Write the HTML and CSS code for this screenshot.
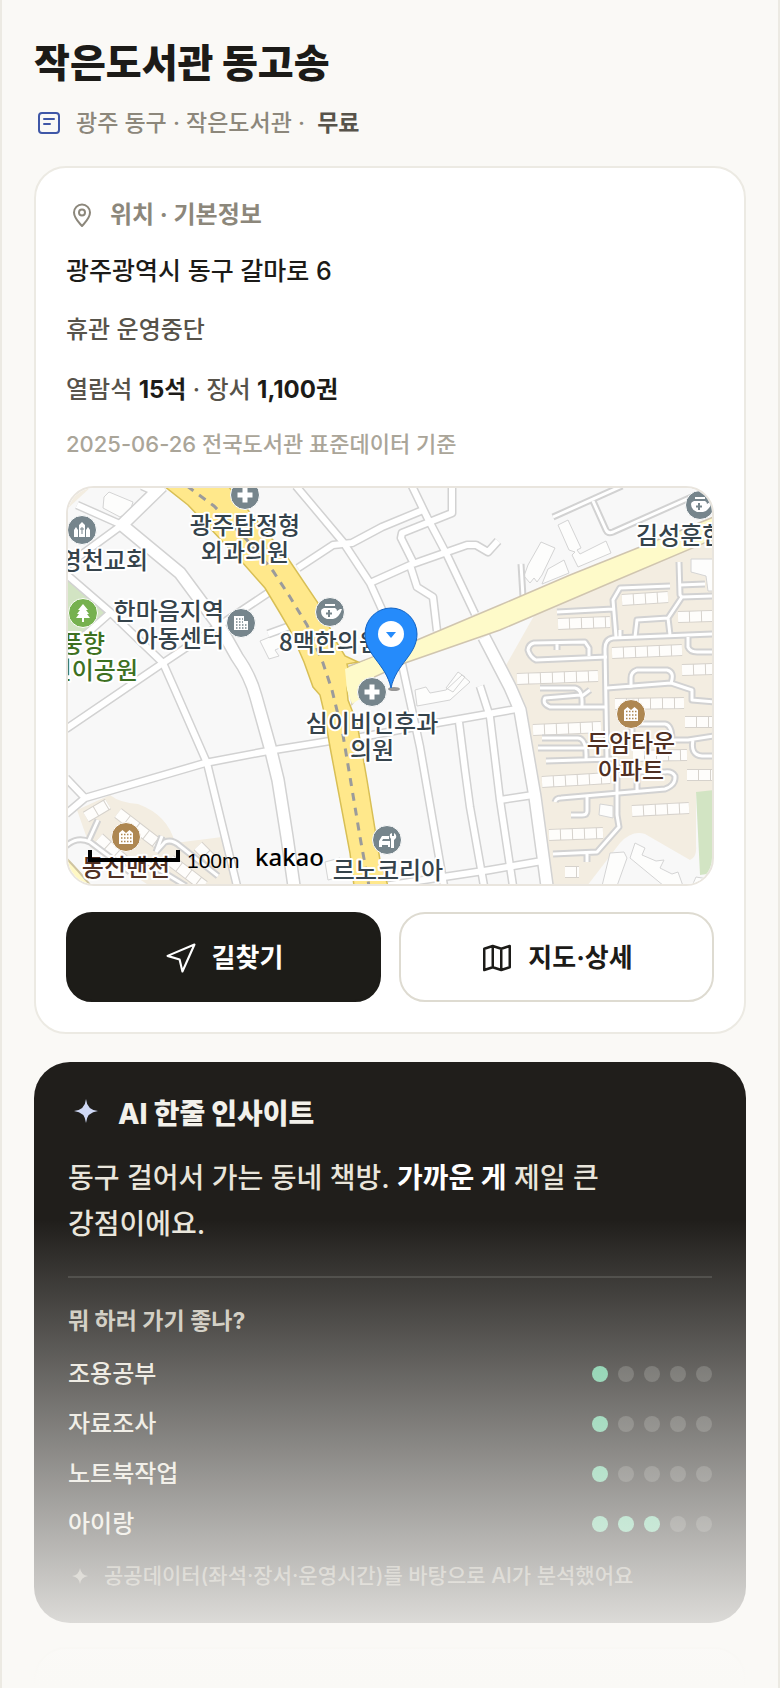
FILE: index.html
```html
<!DOCTYPE html>
<html lang="ko">
<head>
  <meta charset="UTF-8">
  <meta name="viewport" content="width=device-width, initial-scale=1">
  <title>작은도서관 동고송</title>
  <link rel="stylesheet" href="styles.css">
</head>
<body>
  <main class="page">
    <h1 class="title">작은도서관 동고송</h1>
    <p class="subtitle">
      <svg class="icon-md" viewBox="0 0 30 30" fill="none" stroke="#3f57a7" stroke-width="2" stroke-linecap="round">
        <rect x="5" y="5" width="20" height="20" rx="3"/>
        <path d="M10 11h10M10 16h6"/>
      </svg>
      <span>광주 동구 · 작은도서관 · &nbsp;<b>무료</b></span>
    </p>

    <section class="card">
      <h2 class="card-head">
        <svg class="icon-md" viewBox="0 0 30 30" fill="none" stroke="#8c877b" stroke-width="2" stroke-linejoin="round">
          <path d="M16 26c-4-4.500-8-8-8-13.500a8 8 0 0 1 16 0c0 5.500-4 9-8 13.500z"/>
          <circle cx="16" cy="12.500" r="3"/>
        </svg>
        <span>위치 · 기본정보</span>
      </h2>
      <p class="address">광주광역시 동구 갈마로 6</p>
      <p class="hours">휴관 운영중단</p>
      <p class="stats">열람석 <b>15석</b> · 장서 <b>1,100권</b></p>
      <p class="source">2025-06-26 전국도서관 표준데이터 기준</p>

      <div class="map">
        <svg class="map-svg" viewBox="68 488 644 396" role="img" aria-label="지도">
          <defs>
            <g id="wide">
              <path d="M162 486L122 525L180 573L220 627L237 657Q250 675 256 697L270 747L278 780L287 837L294 886"/>
              <path d="M484 637L510 687L520 710L535 797L547 886"/>
            </g>
            <g id="roads">
              <path d="M142 486L160 494M77 505L122 525L66 566"/>
              <path d="M66 574L110 612L163 663L175 690L207 763L237 886"/>
              <path d="M110 613L66 652M268 593L163 663L66 729"/>
              <path d="M66 778L85 798L205 763L268 751L330 741M85 798L66 814"/>
              <path d="M296 486L343 542L370 583L384 614"/>
              <path d="M298 568L333 545L352 543L382 527L423 510"/>
              <path d="M412 486L427 517L447 555L475 614M452 486V513L402 533L401 538L413 562"/>
              <path d="M370 583L410 565L467 545H476L488 552L498 541M410 565L417 587L433 597L437 631"/>
              <path d="M402 664L407 687L420 747L444 886M356 738L437 723L522 708"/>
              <path d="M459 722L465 770L470 807L484 886M480 686L490 717L500 800L513 886"/>
              <path d="M500 800L533 795M384 886L437 878L490 870L542 861M268 634L290 626"/>
            </g>
            <g id="lanes">
              <path d="M553 517L622 486M593 501L606 530Q608 534 613 532L714 487M521 564L523 597"/>
              <path d="M557 612L613 609M670 586L620 588L613 600L616 637M620 630V638"/>
              <path d="M714 634L613 638Q605 639 605 649L607 760"/>
              <path d="M607 657L536 660Q530 657 528 650Q529 644 534 643L585 642L589 648V656M557 642V650"/>
              <path d="M679 562L680 595L682 597L714 596M680 585L705 584M682 597L668 618L637 620L635 637M668 618L670 635"/>
              <path d="M688 637V647Q690 652 697 652H714"/>
              <path d="M607 688L671 683Q675 672 667 670H637Q631 672 631 678V688M671 683L692 690V700L714 702"/>
              <path d="M540 688H575Q583 690 582 706M590 690L582 696M606 707H550Q542 704 545 698L580 695"/>
              <path d="M542 738H578Q587 739 586 760M538 748H584M546 761L612 759"/>
              <path d="M632 735V724H665Q672 725 672 740H688L714 736M693 740Q690 755 702 756H714"/>
              <path d="M555 802Q556 798 561 798L665 789Q676 785 675 776Q672 771 665 772H640M637 772V790"/>
              <path d="M617 760V815L619 827L597 852L553 854M587 852V862M587 797V811Q587 815 582 815H571"/>
              <path d="M66 846Q77 836 90 842L130 872M88 842L98 820M156 852L162 836M156 852L165 842Q172 839 180 846L218 876M186 886L140 858"/>
            </g>
            <g id="houses">
              <path d="M622 600L668 597M558 624L610 622M612 653L682 650M678 617L714 616M682 670L714 669M517 679L598 676M533 730L601 727"/>
              <path d="M542 782L610 778M549 835L603 833M632 811L689 808M615 704L684 703M633 756L687 755M685 722H714M687 775H714M565 872H579"/>
              <path d="M118 813L157 843M99 838L130 866M86 817L108 804M170 860L204 886M198 846L212 860"/>
            </g>
            <g id="clinic">
              <circle r="14.500" class="poi-grey"/>
              <path d="M-2.500-7.500h5v5h5v5h-5v5h-5v-5h-5v-5h5z" fill="#fff"/>
            </g>
            <g id="oriental">
              <circle r="14.500" class="poi-grey"/>
              <path d="M-5-8H5V-6H-5zM-6-4H5Q7-3 7-1L10-3H12Q9 6 3 7H-3Q-9 5-9-1Q-9-3-6-4z" fill="#fff"/>
              <path d="M-1-2V5M-4 1.500H2" stroke="#76858c" stroke-width="2"/>
            </g>
            <g id="apartment">
              <circle r="14.500" class="poi-brown"/>
              <path d="M-7 7V-4L-3.500-7L0-4L3.500-7L7-4V7z" fill="#fff"/>
              <path d="M-5-2.500H6M-5 1H6M-5 4.500H6" stroke="#ae8751" stroke-width="1.500" stroke-dasharray="1.500 1.500"/>
            </g>
          </defs>

          <!-- land -->
          <path d="M60 480H720V890H60z" fill="#f8f8f8"/>
          <path d="M714 538L617 580L535 614L505 667L523 710L548 886H587L620 843Q632 830 645 834L690 860Q697 857 696 846V792H714zM66 486H92L66 510zM77 810L110 795Q120 803 138 804Q168 815 175 843L222 837L234 886H150L90 847z" fill="#f3ede1"/>
          <path d="M696 792L714 790V873L700 875zM66 577H75L109 613L97 627L66 643z" fill="#d2e4c3"/>
          <path d="M66 858Q76 868 91 886H66z" fill="#fff8c4" stroke="#cfc4a0" stroke-width="2"/>
          <g fill="#fdfdfc" stroke="#d4d4d4">
            <path d="M541 542L555 548L542 575L537 582L534 578L530 583L524 576L528 565zM558 525L568 520L581 548L577 550L580 554L606 541L611 553L578 567L572 555L575 552L569 550zM548 569L564 560L569 573L542 584z"/>
            <path d="M691 559H714V591H708L706 576L691 572zM600 804L613 806V818L599 815z"/>
            <path d="M104 497L109 492L133 502L130 511L120 517L103 508zM260 641L282 632L289 644L275 650L279 656L269 659z"/>
            <path d="M415 690L426 687L430 693L446 690L462 675L470 682L450 700L417 706zM446 688L458 672L465 677L453 692zM325 862L340 858L344 876L328 880z"/>
            <path d="M635 843L645 848L642 855L656 861L664 860L660 868L672 874L678 872L683 886L664 886L630 858zM610 853L624 852L627 858L617 886H602zM692 886L696 877L714 880V886z"/>
          </g>
          <use href="#houses" class="house-edge"/>
          <use href="#houses" class="house-fill"/>

          <!-- streets -->
          <use href="#wide" class="street wide-edge"/>
          <use href="#roads" class="street road-edge"/>
          <use href="#lanes" class="street lane-edge"/>
          <use href="#wide" class="street wide-fill"/>
          <use href="#roads" class="street road-fill"/>
          <use href="#lanes" class="street lane-fill"/>
          <path d="M347 667L417 640L500 605L570 575L640 547L716 516V538L617 580L500 630L405 663L372 678L352 704z" fill="#fefac9" stroke="#d0c5af" stroke-width="1.500"/>
          <path d="M164 486L188 505L242 562L265 588L280 613L290 630L304 662L313 687L320 695L324 712L330 747L350 853L354 886H388L380 860L367 780L357 723L348 700L347 688L350 677L347 664L358 662L345 656L337 643L318 603L287 557L228 486z" fill="#ffe88b" stroke="#d8bf55" stroke-width="1.500"/>
          <path d="M345 669L374 657V690L352 704L347 690z" fill="#fefac9"/>
          <path d="M187 486L214 506L247 540L273 571L290 597L307 625L323 663L332 690L343 735L353 795L360 837L369 886" fill="none" stroke="#9b9b9b" stroke-width="3" stroke-dasharray="8 7"/>

          <!-- places -->
          <g class="poi">
            <use href="#clinic" x="245" y="495"/>
            <use href="#clinic" x="372" y="692"/>
            <use href="#oriental" x="330" y="612"/>
            <use href="#oriental" x="700" y="505"/>
            <use href="#apartment" x="631" y="714"/>
            <use href="#apartment" x="126" y="837"/>
            <g transform="translate(82 530)">
              <circle r="14.500" class="poi-grey"/>
              <path d="M-8 7V0L-6-3L-4 0V7zM4 7V0L6-3L8 0V7zM-3 7V-5L0-8L3-5V7z" fill="#fff"/>
              <path d="M0-3V4M-2-1H2" stroke="#76858c"/>
            </g>
            <g transform="translate(83 613)">
              <circle r="14.500" class="poi-green"/>
              <path d="M0-9L5-3H3L6 1H4L7 5H1V9H-1V5H-7L-4 1H-6L-3-3H-5z" fill="#fff"/>
            </g>
            <g transform="translate(241 623)">
              <circle r="14.500" class="poi-grey"/>
              <path d="M-7 7V-7H3V-2H7V7z" fill="#fff"/>
              <path d="M-5-4H2M-5-1H2M-5 2H6M-5 5H6" stroke="#76858c" stroke-width="1.500" stroke-dasharray="1.500 1.500"/>
            </g>
            <g transform="translate(387 840)">
              <circle r="14.500" class="poi-grey"/>
              <path d="M-8 7V1L-5-4H2V-1H-4L-5 1H3V7H1V5H-5V7zM4 8V-1Q2-3 3-6L5-7V-4H7V-7Q10-5 9-2L7 0V8z" fill="#fff"/>
            </g>
          </g>
          <g class="map-label">
            <text x="148" y="569" text-anchor="end">영천교회</text>
            <text x="245" y="534" text-anchor="middle">광주탑정형</text>
            <text x="245" y="561" text-anchor="middle">외과의원</text>
            <text x="224" y="620" text-anchor="end">한마음지역</text>
            <text x="224" y="647" text-anchor="end">아동센터</text>
            <text x="279" y="651">8맥한의원</text>
            <text x="372" y="732" text-anchor="middle">심이비인후과</text>
            <text x="372" y="759" text-anchor="middle">의원</text>
            <text x="388" y="879" text-anchor="middle">르노코리아</text>
            <text x="636" y="544">김성훈한의원</text>
          </g>
          <g class="map-label label-green">
            <text x="105" y="652" text-anchor="end">풍향</text>
            <text x="138" y="679" text-anchor="end">어린이공원</text>
          </g>
          <g class="map-label label-brown">
            <text x="631" y="752" text-anchor="middle">두암타운</text>
            <text x="631" y="779" text-anchor="middle">아파트</text>
            <text x="126" y="876" text-anchor="middle">동신맨션</text>
          </g>

          <ellipse cx="394" cy="689" rx="6" ry="2" fill="#555" opacity=".6"/>
          <path d="M391 688C386 664 365 655 365 634a26 26 0 0 1 52 0C417 655 396 664 391 688z" fill="#258bfb" stroke="#1263c4"/>
          <circle cx="391" cy="634" r="13" fill="#fff"/>
          <path d="M386 632h10l-5 6z" fill="#258bfb"/>

          <path d="M90 850V860H178V850" fill="none" stroke="#000" stroke-width="4"/>
          <text x="187" y="868" class="map-scale">100m</text>
          <text x="255" y="866" class="map-brand">kakao</text>
        </svg>
      </div>

      <div class="actions">
        <button type="button" class="btn btn-dark">
          <svg class="icon-lg" viewBox="0 0 24 24" fill="none" stroke="currentColor" stroke-width="1.500" stroke-linejoin="round"><path d="M2.500 10.500L21.500 2.500L13 21.500L11 13z"/></svg>
          길찾기
        </button>
        <button type="button" class="btn">
          <svg class="icon-lg" viewBox="0 0 24 24" fill="none" stroke="currentColor" stroke-width="1.750" stroke-linejoin="round"><path d="M3 5.500L9 3.500L15 5.500L21 3.500V18.500L15 20.500L9 18.500L3 20.500zM9 3.500V18.500M15 5.500V20.500"/></svg>
          지도·상세
        </button>
      </div>
    </section>

    <section class="insight">
      <h2 class="insight-head">
        <svg class="icon-xl" viewBox="0 0 36 36"><path d="M18 3Q19 14 30 15Q19 16 18 27Q17 16 6 15Q17 14 18 3z" fill="#cfd8f5"/></svg>
        <span>AI 한줄 인사이트</span>
      </h2>
      <p class="insight-text">동구 걸어서 가는 동네 책방. <b>가까운 게</b> 제일 큰<br>강점이에요.</p>
      <h3 class="insight-sub">뭐 하러 가기 좋나?</h3>
      <ul class="scores">
        <li><span>조용공부</span><span class="dots" role="img" aria-label="1/5"><i class="on"></i><i></i><i></i><i></i><i></i></span></li>
        <li><span>자료조사</span><span class="dots" role="img" aria-label="1/5"><i class="on"></i><i></i><i></i><i></i><i></i></span></li>
        <li><span>노트북작업</span><span class="dots" role="img" aria-label="1/5"><i class="on"></i><i></i><i></i><i></i><i></i></span></li>
        <li><span>아이랑</span><span class="dots" role="img" aria-label="3/5"><i class="on"></i><i class="on"></i><i class="on"></i><i></i><i></i></span></li>
      </ul>
      <p class="insight-note">
        <svg class="icon-sm" viewBox="0 0 24 24"><path d="M12 4Q13 11 20 12Q13 13 12 20Q11 13 4 12Q11 11 12 4z" fill="#8c877b"/></svg>
        <span>공공데이터(좌석·장서·운영시간)를 바탕으로 AI가 분석했어요</span>
      </p>
    </section>

    <section class="card card-next"></section>
    <div class="fade"></div>
  </main>
</body>
</html>
```
FILE: styles.css
```css
* {
  box-sizing: border-box;
}
body {
  margin: 0;
  background: #faf9f6;
  color: #1c1b18;
  font-family: Inter, "Noto Sans CJK KR", sans-serif;
  font-weight: 500;
}
h1, h2, h3, p, ul {
  margin: 0;
  padding: 0;
}
svg {
  display: block;
  flex: none;
}
.page {
  position: relative;
  display: flex;
  flex-direction: column;
  min-height: 100vh;
  padding: 36px 32px 0;
  border: solid #eceae3;
  border-width: 0 2px;
  overflow: hidden;
}
.icon-sm { width: 24px; height: 24px; }
.icon-md { width: 30px; height: 30px; }
.icon-lg { width: 34px; height: 34px; }
.icon-xl { width: 36px; height: 36px; }

.title {
  font-size: 39px;
  line-height: 54px;
  font-weight: 800;
}
.subtitle {
  display: flex;
  align-items: center;
  gap: 12px;
  margin-top: 18px;
  font-size: 23px;
  line-height: 30px;
  color: #8c877b;
}
.subtitle b {
  font-weight: 700;
  color: #57534a;
}

/* 위치 카드 */
.card {
  margin-top: 28px;
  padding: 30px;
  background: #fff;
  border: 2px solid #eceae3;
  border-radius: 32px;
}
.card-head {
  display: flex;
  align-items: center;
  gap: 14px;
  font-size: 24px;
  line-height: 34px;
  font-weight: 700;
  color: #8c877b;
}
.address {
  margin-top: 19px;
  font-size: 25px;
  line-height: 40px;
}
.hours, .stats {
  font-size: 24px;
  line-height: 36px;
  color: #57534a;
}
.hours {
  margin-top: 21px;
}
.stats {
  margin-top: 24px;
}
.stats b {
  font-weight: 700;
  color: #1c1b18;
}
.source {
  margin-top: 20px;
  font-size: 22px;
  line-height: 32px;
  color: #aaa599;
}
.actions {
  display: grid;
  grid-template-columns: 1fr 1fr;
  gap: 18px;
  margin-top: 26px;
}
.btn {
  display: flex;
  align-items: center;
  justify-content: center;
  gap: 14px;
  height: 90px;
  padding: 2px 0 0;
  border: 2px solid #dedbd1;
  border-radius: 26px;
  background: #fff;
  color: #1c1b18;
  font: 700 26px/36px Inter, "Noto Sans CJK KR", sans-serif;
  cursor: pointer;
}
.btn-dark {
  background: #1d1c18;
  border-color: #1d1c18;
  color: #fff;
}

/* 지도 */
.map {
  margin-top: 26px;
  border: 2px solid #e9e5de;
  border-radius: 28px;
  overflow: hidden;
}
.map-svg {
  width: 100%;
  height: auto;
}
.street {
  fill: none;
  stroke-linejoin: round;
}
.wide-edge { stroke: #d2d2d2; stroke-width: 14px; }
.wide-fill { stroke: #fff; stroke-width: 11px; }
.road-edge { stroke: #d2d2d2; stroke-width: 9px; }
.road-fill { stroke: #fff; stroke-width: 6px; }
.lane-edge { stroke: #d2d2d2; stroke-width: 7px; }
.lane-fill { stroke: #fff; stroke-width: 3px; }
.house-edge { fill: none; stroke: #d6d2cc; stroke-width: 12px; }
.house-fill { fill: none; stroke: #fefdfb; stroke-width: 10px; stroke-dasharray: 11 1; }
.poi circle, [class^="poi-"] {
  stroke: #fff;
  stroke-width: 1px;
}
.poi-grey { fill: #76858c; }
.poi-brown { fill: #ae8751; }
.poi-green { fill: #76b14f; }
.map-label {
  font-family: "Noto Sans CJK KR", sans-serif;
  font-size: 24px;
  font-weight: 500;
  fill: #35434b;
  stroke: #fff;
  stroke-width: 4px;
  stroke-linejoin: round;
  paint-order: stroke;
}
.label-green { fill: #3d7021; }
.label-brown { fill: #4f2f22; }
.map-scale {
  font-family: "Liberation Sans", sans-serif;
  font-size: 21px;
  font-weight: 400;
}
.map-brand {
  font-family: "Noto Sans", sans-serif;
  font-size: 24px;
  font-weight: 500;
}

/* AI 인사이트 */
.insight {
  margin-top: 28px;
  padding: 36px 34px 34px;
  background: #201e1b;
  border-radius: 36px;
  color: #f3f1eb;
}
.insight-head {
  display: flex;
  align-items: center;
  gap: 14px;
  height: 32px;
  font-size: 28px;
  line-height: 32px;
  font-weight: 800;
}
.insight-text {
  margin-top: 25px;
  padding-bottom: 29px;
  border-bottom: 2px solid #3b3a36;
  font-size: 28px;
  line-height: 46px;
  color: #e9e5db;
}
.insight-text b {
  font-weight: 700;
  color: #fff;
}
.insight-sub {
  margin-top: 26px;
  font-size: 23px;
  line-height: 34px;
  font-weight: 700;
  color: #c9c5b9;
}
.scores {
  margin-top: 11px;
  list-style: none;
  font-size: 24px;
  line-height: 50px;
  color: #e9e5db;
}
.scores li {
  display: flex;
  align-items: center;
  justify-content: space-between;
  height: 50px;
}
.dots {
  display: flex;
  gap: 10px;
}
.dots i {
  width: 16px;
  height: 16px;
  border-radius: 50%;
  background: #464541;
}
.dots .on {
  background: #6ac79b;
}
.insight-note {
  display: flex;
  align-items: center;
  gap: 12px;
  margin-top: 14px;
  font-size: 21px;
  line-height: 26px;
  color: #8c877b;
}
.card-next {
  flex: 1;
  margin-top: 24px;
  padding: 16px;
  border-bottom: 0;
  border-radius: 32px 32px 0 0;
}
.fade {
  position: absolute;
  left: 0;
  right: 0;
  bottom: 0;
  height: 468px;
  background: linear-gradient(rgba(250, 249, 246, 0), #faf9f6);
}
```
